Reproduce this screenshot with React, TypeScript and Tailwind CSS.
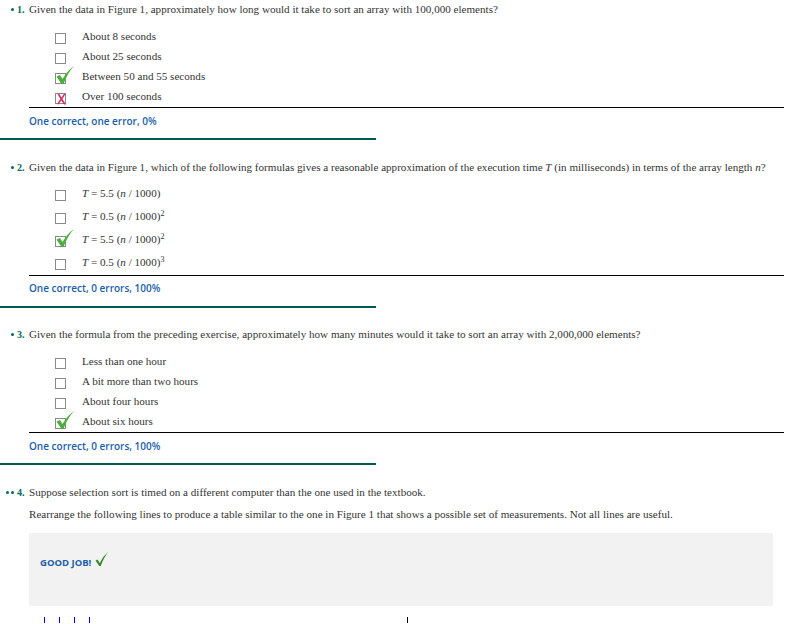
import React from "react";

type Mark = "none" | "check" | "cross";

const serif = { fontFamily: '"Liberation Serif", "DejaVu Serif", serif' };
const sans = { fontFamily: '"Open Sans", "DejaVu Sans", sans-serif' };

function Box({ mark }: { mark: Mark }) {
  return (
    <span className="relative inline-block w-[11px] h-[11px] border border-[#8a8a8a] bg-white shrink-0">
      {mark === "check" && (
        <svg className="absolute left-[-1px] top-[-9px]" width="20" height="20" viewBox="0 0 20 20">
          <path d="M1.5 11.5 L5 10 L7.5 14 Q12 6 19 1 Q12.5 8 8.5 19 L6.5 19 Z" fill="#4cae3c" />
        </svg>
      )}
      {mark === "cross" && (
        <svg className="absolute left-[0px] top-[-1px]" width="11" height="12" viewBox="0 0 11 12">
          <path d="M1.5 1 L3.5 1 L5.5 4.5 L8 0.5 L9.5 1 L6.5 6 L10 11.5 L8 11.5 L5.3 7.5 L2.5 11.5 L1 11 L4.3 6 Z" fill="#d63463" />
        </svg>
      )}
    </span>
  );
}

function Header({ num, dots = 1, children }: { num: string; dots?: number; children: React.ReactNode }) {
  return (
    <div className="flex items-center h-4 text-[11.1px] text-[#333] whitespace-nowrap" style={serif}>
      <span className="flex gap-[2px] justify-end w-[13px] mr-[3px]">
        {Array.from({ length: dots }).map((_, i) => (
          <span key={i} className="w-[3px] h-[3px] rounded-full bg-[#00695c]" />
        ))}
      </span>
      <span className="font-bold text-[#00695c] w-[12px] text-[10px]">{num}</span>
      <span>{children}</span>
    </div>
  );
}

function Option({ mark, h, children }: { mark: Mark; h: string; children: React.ReactNode }) {
  return (
    <div className={`flex items-center ${h} pl-[26px]`}>
      <span className="mt-[3px]">
        <Box mark={mark} />
      </span>
      <span className="ml-[16px] text-[11.1px] text-[#333]" style={serif}>
        {children}
      </span>
    </div>
  );
}

function Summary({ children, mt }: { children: React.ReactNode; mt: string }) {
  return (
    <div className={`${mt} h-[14px] flex items-center text-[10px] font-semibold text-[#1a5ea8]`} style={sans}>
      {children}
    </div>
  );
}

function Formula({ a, exp }: { a: string; exp?: string }) {
  return (
    <span>
      <i>T</i> = {a} (<i>n</i> / 1000){exp && <sup className="text-[8px]">{exp}</sup>}
    </span>
  );
}

export default function App() {
  return (
    <div className="w-[798px] h-[624px] overflow-hidden bg-white pt-[1px]">
      <div className="pl-[1px]">
        <Header num="1.">
          Given the data in Figure 1, approximately how long would it take to sort an array with 100,000 elements?
        </Header>
      </div>
      <div className="pl-[29px] pr-[14px]">
        <div className="mt-[9px]">
          <Option mark="none" h="h-5">About 8 seconds</Option>
          <Option mark="none" h="h-5">About 25 seconds</Option>
          <Option mark="check" h="h-5">Between 50 and 55 seconds</Option>
          <Option mark="cross" h="h-5">Over 100 seconds</Option>
        </div>
        <div className="mt-[1px] h-px bg-black" />
        <Summary mt="mt-[6px]">One correct, one error, 0%</Summary>
      </div>
      <div className="mt-[10px] h-[2px] w-[376px] bg-[#00594f]" />

      <div className="mt-[19px] pl-[1px]">
        <Header num="2.">
          Given the data in Figure 1, which of the following formulas gives a reasonable approximation of the execution time{" "}
          <i>T</i> (in milliseconds) in terms of the array length <i>n</i>?
        </Header>
      </div>
      <div className="pl-[29px] pr-[14px]">
        <div className="mt-[7px]">
          <Option mark="none" h="h-[23px]"><Formula a="5.5" /></Option>
          <Option mark="none" h="h-[23px]"><Formula a="0.5" exp="2" /></Option>
          <Option mark="check" h="h-[23px]"><Formula a="5.5" exp="2" /></Option>
          <Option mark="none" h="h-[23px]"><Formula a="0.5" exp="3" /></Option>
        </div>
        <div className="mt-[1px] h-px bg-black" />
        <Summary mt="mt-[5px]">One correct, 0 errors, 100%</Summary>
      </div>
      <div className="mt-[11px] h-[2px] w-[376px] bg-[#00594f]" />

      <div className="mt-[18px] pl-[1px]">
        <Header num="3.">
          Given the formula from the preceding exercise, approximately how many minutes would it take to sort an array with 2,000,000 elements?
        </Header>
      </div>
      <div className="pl-[29px] pr-[14px]">
        <div className="mt-[9px]">
          <Option mark="none" h="h-5">Less than one hour</Option>
          <Option mark="none" h="h-5">A bit more than two hours</Option>
          <Option mark="none" h="h-5">About four hours</Option>
          <Option mark="check" h="h-5">About six hours</Option>
        </div>
        <div className="mt-[1px] h-px bg-black" />
        <Summary mt="mt-[6px]">One correct, 0 errors, 100%</Summary>
      </div>
      <div className="mt-[10px] h-[2px] w-[376px] bg-[#00594f]" />

      <div className="mt-[19px] pl-[1px]">
        <Header num="4." dots={2}>
          Suppose selection sort is timed on a different computer than the one used in the textbook.
        </Header>
      </div>
      <div className="pl-[29px] pr-[25px]">
        <div className="mt-[6px] h-4 flex items-center text-[11.1px] text-[#333] whitespace-nowrap" style={serif}>
          Rearrange the following lines to produce a table similar to the one in Figure 1 that shows a possible set of measurements. Not all lines are useful.
        </div>
        <div className="mt-[11px] h-[73px] bg-[#f2f2f2] pl-[11px] pt-[18px]">
          <div className="flex items-end gap-[4px]">
            <span className="text-[9.5px] font-bold text-[#1a5ea8] leading-[14px]" style={sans}>
              GOOD JOB!
            </span>
            <svg width="14" height="16" viewBox="0 0 14 16" className="mb-[3px]">
              <path d="M0.5 9.5 L2.5 8.5 L4.8 12 Q8 5 13.5 0.5 Q9 6 5.8 15 L4.2 15 Z" fill="#3d8a2f" />
            </svg>
          </div>
        </div>
        <div className="mt-[11px] h-[6px] relative">
          <div className="flex gap-[14px] pl-[15px]">
            <span className="w-px h-[6px] bg-[#0000ee]" />
            <span className="w-px h-[6px] bg-[#0000ee]" />
            <span className="w-px h-[6px] bg-[#0000ee]" />
            <span className="w-px h-[6px] bg-[#0000ee]" />
          </div>
          <span className="absolute left-[378px] top-0 w-px h-[6px] bg-black" />
        </div>
      </div>
    </div>
  );
}
